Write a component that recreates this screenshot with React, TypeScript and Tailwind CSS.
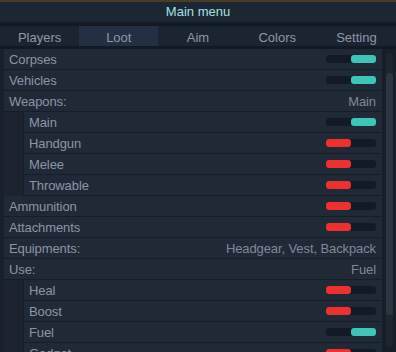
import React from 'react';

type Row = {
  label: string;
  sub?: boolean;
  on?: boolean;
  value?: string;
};

const rows: Row[] = [
  { label: 'Corpses', on: true },
  { label: 'Vehicles', on: true },
  { label: 'Weapons:', value: 'Main' },
  { label: 'Main', sub: true, on: true },
  { label: 'Handgun', sub: true, on: false },
  { label: 'Melee', sub: true, on: false },
  { label: 'Throwable', sub: true, on: false },
  { label: 'Ammunition', on: false },
  { label: 'Attachments', on: false },
  { label: 'Equipments:', value: 'Headgear, Vest, Backpack' },
  { label: 'Use:', value: 'Fuel' },
  { label: 'Heal', sub: true, on: false },
  { label: 'Boost', sub: true, on: false },
  { label: 'Fuel', sub: true, on: true },
  { label: 'Gadget', sub: true, on: false },
];

const tabs = ['Players', 'Loot', 'Aim', 'Colors', 'Setting'];

const Toggle = ({ on }: { on: boolean }) => (
  <div className="w-[50px] h-[8px] rounded-[3px] bg-[#121a24] flex">
    {on ? (
      <>
        <div className="w-[25px]" />
        <div className="w-[25px] h-full rounded-[3px] bg-[#3ec5b5]" />
      </>
    ) : (
      <div className="w-[25px] h-full rounded-[3px] bg-[#f02f2f]" />
    )}
  </div>
);

export default function App() {
  return (
    <div className="w-[396px] h-[352px] overflow-hidden bg-[#18212b] flex flex-col text-[13px] font-['Liberation_Sans',sans-serif]">
      <div className="h-[2px] bg-[#4a3d28] shrink-0" />

      {/* Title */}
      <div className="h-[20px] shrink-0 bg-[#1c2734] flex items-center justify-center text-[#a3e2e2]">
        Main menu
      </div>
      <div className="h-[4px] shrink-0 bg-[#121922]" />

      {/* Tabs */}
      <div className="h-[20px] shrink-0 grid grid-cols-5 bg-[#1b2531] text-[#8c99a6]">
        {tabs.map((t) => (
          <div
            key={t}
            className={`flex items-center justify-center pt-[2px] ${t === 'Loot' ? 'bg-[#223041]' : ''}`}
          >
            {t}
          </div>
        ))}
      </div>
      <div className="h-[3px] shrink-0 bg-[#121922]" />

      {/* List + scrollbar */}
      <div className="flex flex-1 min-h-0 pl-[4px]">
        <div className="flex-1 flex flex-col">
          {rows.map((r, i) => (
            <div key={i} className="flex h-[21px] shrink-0">
              {r.sub && <div className="w-[20px] bg-[#1a232e] border-r border-[#151d26]" />}
              <div className="flex-1 flex items-center justify-between bg-[#202a37] border-b border-[#151d27] pl-[5px] pr-[6px] text-[#8a96a3]">
                <span className="pt-[1px] tracking-[-0.1px]">{r.label}</span>
                {r.value !== undefined ? (
                  <span className="pt-[1px] tracking-[-0.1px] text-[#7d8996]">{r.value}</span>
                ) : (
                  <Toggle on={!!r.on} />
                )}
              </div>
            </div>
          ))}
        </div>
        <div className="w-[14px] shrink-0 bg-[#161e27] flex justify-center pt-[4px]">
          <div className="w-[7px] h-[294px] rounded-[3px] bg-[#1d2630] flex flex-col pt-[20px]">
            <div className="h-[242px] rounded-[3px] bg-[#2b3643]" />
          </div>
        </div>
      </div>
    </div>
  );
}
